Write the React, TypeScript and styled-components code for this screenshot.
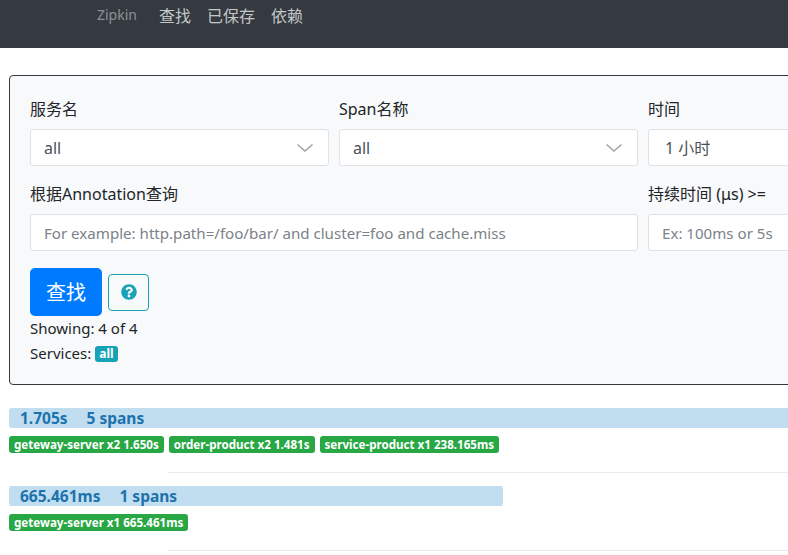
import React from "react";
import styled, { createGlobalStyle } from "styled-components";
import { FaQuestionCircle } from "react-icons/fa";

const Global = createGlobalStyle`
  html, body { margin: 0; padding: 0; background: #fff; }
  body {
    font-family: "Noto Sans", "Noto Sans CJK SC", sans-serif;
    font-size: 16px;
    line-height: 24px;
    color: #212529;
    overflow: hidden;
    width: 788px;
    height: 555px;
  }
  * { box-sizing: border-box; }
`;

const Page = styled.div`
  width: 788px;
  overflow: hidden;
`;

const NavBar = styled.nav`
  height: 48px;
  background: #343a40;
  display: flex;
  align-items: flex-start;
  padding: 3px 0 0 97px;
`;

const Brand = styled.span`
  font-size: 14px;
  line-height: 24px;
  color: rgba(255, 255, 255, 0.45);
  margin-right: 22px;
`;

const NavLinks = styled.div`
  display: flex;
  gap: 16px;
`;

const NavLink = styled.span`
  font-size: 16px;
  line-height: 24px;
  color: rgba(255, 255, 255, 0.72);
  font-family: "Noto Sans CJK SC", sans-serif;
`;

const Main = styled.main`
  padding: 27px 0 0 9px;
`;

const Card = styled.section`
  width: 1000px;
  border: 1px solid #343a40;
  border-radius: 4px;
  background: #f8f9fa;
  padding: 21px 20px 18px 20px;
`;

const FormGrid = styled.div`
  display: grid;
  grid-template-columns: 299px 299px 299px;
  column-gap: 10px;
  row-gap: 16px;
`;

const Field = styled.div<{ $span?: number }>`
  grid-column: span ${(p) => p.$span ?? 1};
  display: flex;
  flex-direction: column;
  gap: 8px;
`;

const Label = styled.label`
  font-size: 16px;
  line-height: 24px;
  color: #212529;
  font-family: "Noto Sans", "Noto Sans CJK SC", sans-serif;
`;

const SelectBox = styled.div<{ $indent?: number }>`
  height: 37px;
  background: #fff;
  border: 1px solid #dee2e6;
  border-radius: 3px;
  display: flex;
  align-items: center;
  justify-content: space-between;
  padding: 0 14px 0 ${(p) => p.$indent ?? 13}px;
  color: #495057;
  font-size: 16px;
`;

const Input = styled.div`
  height: 37px;
  background: #fff;
  border: 1px solid #dee2e6;
  border-radius: 3px;
  display: flex;
  align-items: center;
  padding: 0 13px;
  color: #7b8288;
  font-size: 15.1px;
  white-space: nowrap;
  overflow: hidden;
`;

const Chevron = () => (
  <svg width="18" height="10" viewBox="0 0 18 10">
    <polyline points="1.5,1.5 9,8 16.5,1.5" fill="none" stroke="#a0a6ab" strokeWidth="1.6" />
  </svg>
);

const Actions = styled.div`
  display: flex;
  align-items: center;
  gap: 6px;
  margin-top: 17px;
`;

const PrimaryButton = styled.button`
  height: 48px;
  padding: 0 16px;
  border: none;
  border-radius: 5px;
  background: #007bff;
  color: #fff;
  font-family: "Noto Sans CJK SC", sans-serif;
  font-size: 20px;
  line-height: 30px;
`;

const HelpButton = styled.button`
  width: 41px;
  height: 37px;
  border: 1px solid #17a2b8;
  border-radius: 4px;
  background: transparent;
  display: flex;
  align-items: center;
  justify-content: center;
  color: #17a2b8;
  padding: 0;
`;

const Info = styled.div`
  font-size: 15px;
  line-height: 25px;
  color: #212529;
`;

const InfoBadge = styled.span`
  display: inline-block;
  background: #17a2b8;
  color: #fff;
  font-weight: 700;
  font-size: 12px;
  line-height: 16px;
  padding: 0 4px;
  border-radius: 3px;
  margin-left: 4px;
  vertical-align: 1px;
`;

const Results = styled.div`
  margin-top: 23px;
  display: flex;
  flex-direction: column;
`;

const Trace = styled.div`
  display: flex;
  flex-direction: column;
`;

const DurationBar = styled.div`
  height: 20px;
  background: #c0def0;
  border-radius: 3px;
  display: flex;
  align-items: center;
  padding-left: 11px;
  gap: 19px;
  color: #1c72ad;
  font-weight: 700;
  font-size: 15.5px;
  white-space: nowrap;
`;

const Badges = styled.div`
  display: flex;
  gap: 5px;
  margin-top: 8px;
`;

const ServiceBadge = styled.span`
  background: #28a745;
  color: #fff;
  font-weight: 700;
  font-size: 11.6px;
  line-height: 17px;
  height: 17px;
  padding: 0 5px;
  border-radius: 3px;
  white-space: nowrap;
`;

const Divider = styled.hr`
  margin: 19px 0 13px 159px;
  border: none;
  border-top: 1px solid #e9ecef;
  width: 800px;
`;

const traces = [
  {
    duration: "1.705s",
    spans: "5 spans",
    width: 1000,
    services: ["geteway-server x2 1.650s", "order-product x2 1.481s", "service-product x1 238.165ms"],
  },
  {
    duration: "665.461ms",
    spans: "1 spans",
    width: 494,
    services: ["geteway-server x1 665.461ms"],
  },
];

export default function App() {
  return (
    <Page>
      <Global />
      <NavBar>
        <Brand>Zipkin</Brand>
        <NavLinks>
          <NavLink>查找</NavLink>
          <NavLink>已保存</NavLink>
          <NavLink>依赖</NavLink>
        </NavLinks>
      </NavBar>
      <Main>
        <Card>
          <FormGrid>
            <Field>
              <Label>服务名</Label>
              <SelectBox>
                <span>all</span>
                <Chevron />
              </SelectBox>
            </Field>
            <Field>
              <Label>Span名称</Label>
              <SelectBox>
                <span>all</span>
                <Chevron />
              </SelectBox>
            </Field>
            <Field>
              <Label>时间</Label>
              <SelectBox $indent={16}>
                <span>1 小时</span>
              </SelectBox>
            </Field>
            <Field $span={2}>
              <Label>根据Annotation查询</Label>
              <Input>For example: http.path=/foo/bar/ and cluster=foo and cache.miss</Input>
            </Field>
            <Field>
              <Label>持续时间 (μs) &gt;=</Label>
              <Input>Ex: 100ms or 5s</Input>
            </Field>
          </FormGrid>
          <Actions>
            <PrimaryButton>查找</PrimaryButton>
            <HelpButton>
              <FaQuestionCircle size={16} />
            </HelpButton>
          </Actions>
          <Info>Showing: 4 of 4</Info>
          <Info>
            Services:<InfoBadge>all</InfoBadge>
          </Info>
        </Card>
        <Results>
          {traces.map((t) => (
            <Trace key={t.duration}>
              <DurationBar style={{ width: t.width }}>
                <span>{t.duration}</span>
                <span>{t.spans}</span>
              </DurationBar>
              <Badges>
                {t.services.map((s) => (
                  <ServiceBadge key={s}>{s}</ServiceBadge>
                ))}
              </Badges>
              <Divider />
            </Trace>
          ))}
        </Results>
      </Main>
    </Page>
  );
}
